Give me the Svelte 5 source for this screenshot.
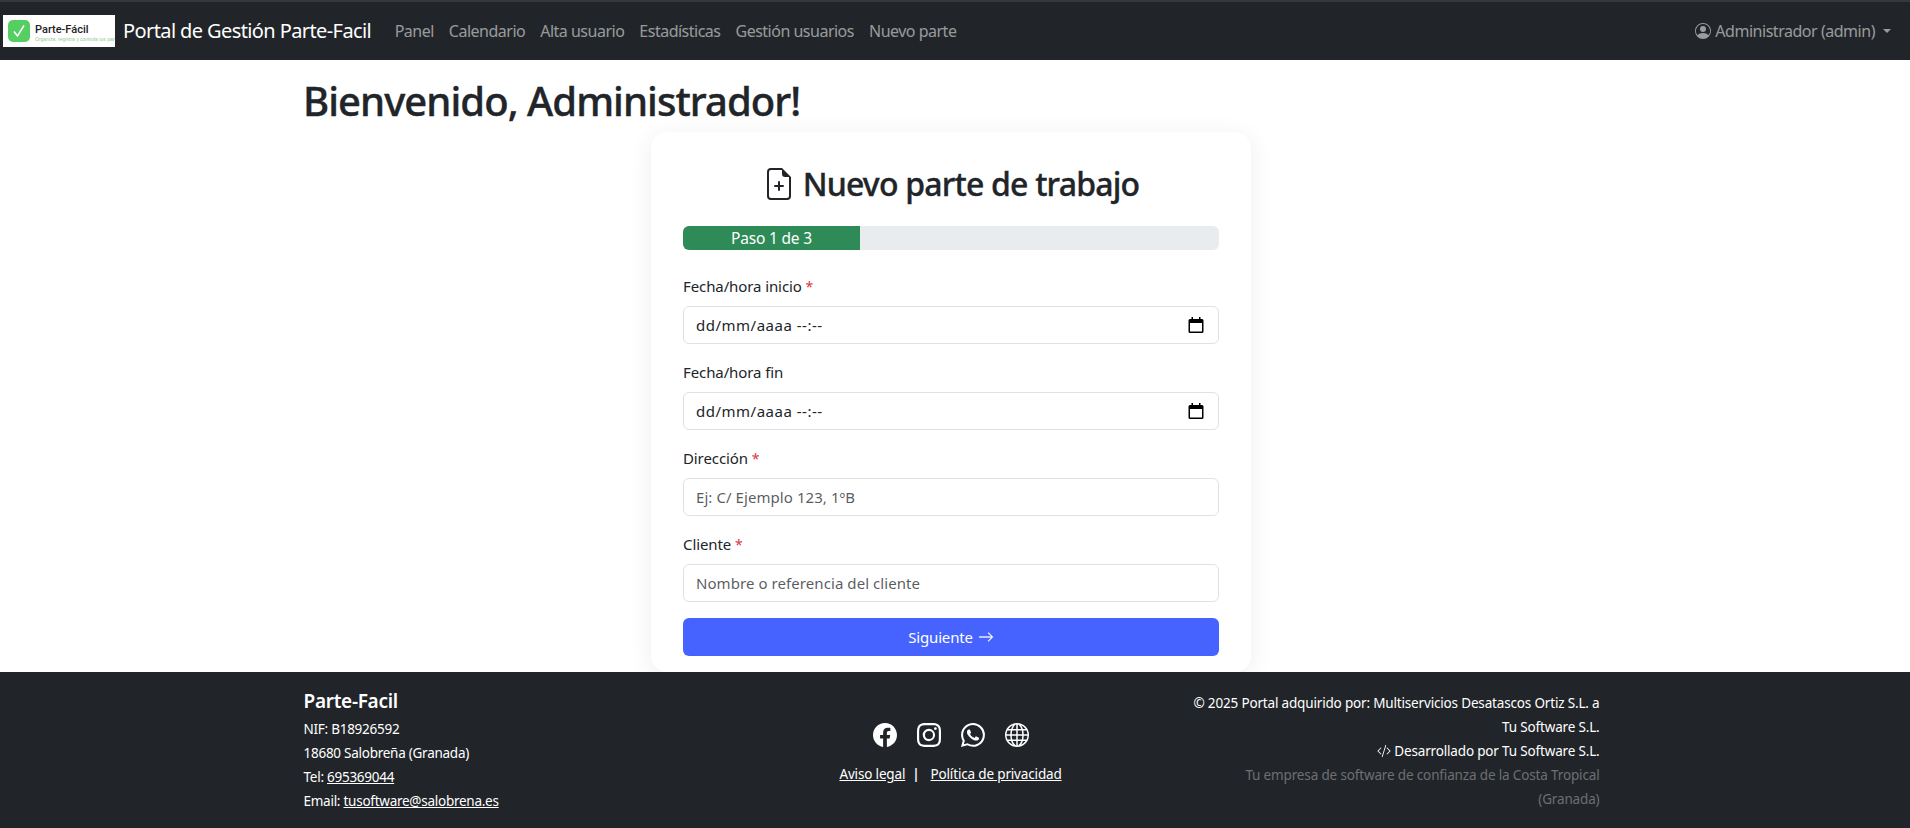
<script>
  const links = ["Panel", "Calendario", "Alta usuario", "Estadísticas", "Gestión usuarios", "Nuevo parte"];
</script>

<div class="page">
  <nav class="navbar">
    <div class="logo">
      <span class="logo-mark">
        <svg viewBox="0 0 16 16" width="16" height="16" fill="none" stroke="#fff" stroke-width="1.5"><path d="M3 8.5 6.5 13 13 2.5" /></svg>
      </span>
      <div class="logo-text">
        <span class="logo-name">Parte-Fácil</span>
        <span class="logo-sub">Organiza, registra y controla tus partes</span>
      </div>
    </div>
    <a class="brand" href="#top">Portal de Gestión Parte-Facil</a>
    <ul class="nav-links">
      {#each links as link}
        <li><a href="#top">{link}</a></li>
      {/each}
    </ul>
    <a class="user" href="#top">
      <svg viewBox="0 0 16 16" width="16" height="16" fill="currentColor">
        <path d="M11 6a3 3 0 1 1-6 0 3 3 0 0 1 6 0" />
        <path fill-rule="evenodd" d="M0 8a8 8 0 1 1 16 0A8 8 0 0 1 0 8m8-7a7 7 0 0 0-5.468 11.37C3.242 11.226 4.805 10 8 10s4.757 1.225 5.468 2.37A7 7 0 0 0 8 1" />
      </svg>
      Administrador (admin)
      <span class="caret"></span>
    </a>
  </nav>

  <main class="main">
    <div class="container">
      <h1>Bienvenido, Administrador!</h1>
      <div class="card">
        <h2>
          <svg viewBox="0 0 16 16" width="32" height="32" fill="currentColor">
            <path d="M8 6.5a.5.5 0 0 1 .5.5v1.5H10a.5.5 0 0 1 0 1H8.5V11a.5.5 0 0 1-1 0V9.5H6a.5.5 0 0 1 0-1h1.5V7a.5.5 0 0 1 .5-.5" />
            <path d="M14 4.5V14a2 2 0 0 1-2 2H4a2 2 0 0 1-2-2V2a2 2 0 0 1 2-2h5.5zm-3 0A1.5 1.5 0 0 1 9.5 3V1H4a1 1 0 0 0-1 1v12a1 1 0 0 0 1 1h8a1 1 0 0 0 1-1V4.5z" />
          </svg>
          Nuevo parte de trabajo
        </h2>

        <div class="progress">
          <div class="progress-bar" style="width: 33%">Paso 1 de 3</div>
        </div>

        <div class="field">
          <label for="inicio">Fecha/hora inicio <span class="req">*</span></label>
          <div class="date-wrap">
            <input id="inicio" class="control date" type="text" value="dd/mm/aaaa --:--" readonly />
            <svg class="cal" viewBox="0 0 16 16" width="16" height="16" fill="#000">
              <path d="M3.5 0v2H2a1.5 1.5 0 0 0-1.5 1.5v11A1.5 1.5 0 0 0 2 16h12a1.5 1.5 0 0 0 1.5-1.5v-11A1.5 1.5 0 0 0 14 2h-1.5V0H11v2H5V0zM2 6h12v8.5H2z" />
            </svg>
          </div>
        </div>

        <div class="field">
          <label for="fin">Fecha/hora fin</label>
          <div class="date-wrap">
            <input id="fin" class="control date" type="text" value="dd/mm/aaaa --:--" readonly />
            <svg class="cal" viewBox="0 0 16 16" width="16" height="16" fill="#000">
              <path d="M3.5 0v2H2a1.5 1.5 0 0 0-1.5 1.5v11A1.5 1.5 0 0 0 2 16h12a1.5 1.5 0 0 0 1.5-1.5v-11A1.5 1.5 0 0 0 14 2h-1.5V0H11v2H5V0zM2 6h12v8.5H2z" />
            </svg>
          </div>
        </div>

        <div class="field">
          <label for="dir">Dirección <span class="req">*</span></label>
          <input id="dir" class="control" type="text" placeholder="Ej: C/ Ejemplo 123, 1ºB" />
        </div>

        <div class="field">
          <label for="cli">Cliente <span class="req">*</span></label>
          <input id="cli" class="control" type="text" placeholder="Nombre o referencia del cliente" />
        </div>

        <button class="next" type="button">
          Siguiente
          <svg viewBox="0 0 16 16" width="16" height="16" fill="currentColor" stroke="currentColor" stroke-width="0.3">
            <path fill-rule="evenodd" d="M1 8a.5.5 0 0 1 .5-.5h11.793l-3.147-3.146a.5.5 0 0 1 .708-.708l4 4a.5.5 0 0 1 0 .708l-4 4a.5.5 0 0 1-.708-.708L13.293 8.5H1.5A.5.5 0 0 1 1 8" />
          </svg>
        </button>
      </div>
    </div>
  </main>

  <footer class="footer">
    <div class="container footer-row">
      <div class="col col-left">
        <h5>Parte-Facil</h5>
        <div>NIF: B18926592</div>
        <div>18680 Salobreña (Granada)</div>
        <div>Tel: <a href="#top">695369044</a></div>
        <div>Email: <a href="#top">tusoftware@salobrena.es</a></div>
      </div>

      <div class="col col-center">
        <div class="socials">
          <svg viewBox="0 0 16 16" width="24" height="24" fill="currentColor">
            <path d="M16 8.049c0-4.446-3.582-8.05-8-8.05C3.58 0-.002 3.603-.002 8.05c0 4.017 2.926 7.347 6.75 7.951v-5.625h-2.03V8.05H6.75V6.275c0-2.017 1.195-3.131 3.022-3.131.876 0 1.791.157 1.791.157v1.98h-1.009c-.993 0-1.303.621-1.303 1.258v1.51h2.218l-.354 2.326H9.25V16c3.824-.604 6.75-3.934 6.75-7.951" />
          </svg>
          <svg viewBox="0 0 16 16" width="24" height="24" fill="currentColor">
            <path d="M8 0C5.829 0 5.556.01 4.703.048 3.85.088 3.269.222 2.76.42a3.9 3.9 0 0 0-1.417.923A3.9 3.9 0 0 0 .42 2.76C.222 3.268.087 3.85.048 4.7.01 5.555 0 5.827 0 8.001c0 2.172.01 2.444.048 3.297.04.852.174 1.433.372 1.942.205.526.478.972.923 1.417.444.445.89.719 1.416.923.51.198 1.09.333 1.942.372C5.555 15.99 5.827 16 8 16s2.444-.01 3.298-.048c.851-.04 1.434-.174 1.943-.372a3.9 3.9 0 0 0 1.416-.923c.445-.445.718-.891.923-1.417.197-.509.332-1.09.372-1.942C15.99 10.445 16 10.173 16 8s-.01-2.445-.048-3.299c-.04-.851-.175-1.433-.372-1.941a3.9 3.9 0 0 0-.923-1.417A3.9 3.9 0 0 0 13.24.42c-.51-.198-1.092-.333-1.943-.372C10.443.01 10.172 0 7.998 0zm-.717 1.442h.718c2.136 0 2.389.007 3.232.046.78.035 1.204.166 1.486.275.373.145.64.319.92.599s.453.546.598.92c.11.281.24.705.275 1.485.039.843.047 1.096.047 3.231s-.008 2.389-.047 3.232c-.035.78-.166 1.203-.275 1.485a2.5 2.5 0 0 1-.599.919c-.28.28-.546.453-.92.598-.28.11-.704.24-1.485.276-.843.038-1.096.047-3.232.047s-2.39-.009-3.233-.047c-.78-.036-1.203-.166-1.485-.276a2.5 2.5 0 0 1-.92-.598 2.5 2.5 0 0 1-.6-.92c-.109-.281-.24-.705-.275-1.485-.038-.843-.046-1.096-.046-3.233s.008-2.388.046-3.231c.036-.78.166-1.204.276-1.486.145-.373.319-.64.599-.92s.546-.453.92-.598c.282-.11.705-.24 1.485-.276.738-.034 1.024-.044 2.515-.045zm4.988 1.328a.96.96 0 1 0 0 1.92.96.96 0 0 0 0-1.92m-4.27 1.122a4.109 4.109 0 1 0 0 8.217 4.109 4.109 0 0 0 0-8.217m0 1.441a2.667 2.667 0 1 1 0 5.334 2.667 2.667 0 0 1 0-5.334" />
          </svg>
          <svg viewBox="0 0 16 16" width="24" height="24" fill="currentColor">
            <path d="M13.601 2.326A7.85 7.85 0 0 0 7.994 0C3.627 0 .068 3.558.064 7.926c0 1.399.366 2.76 1.057 3.965L0 16l4.204-1.102a7.9 7.9 0 0 0 3.79.965h.004c4.368 0 7.926-3.558 7.93-7.93A7.9 7.9 0 0 0 13.6 2.326zM7.994 14.521a6.6 6.6 0 0 1-3.356-.92l-.24-.144-2.494.654.666-2.433-.156-.251a6.56 6.56 0 0 1-1.007-3.505c0-3.626 2.957-6.584 6.591-6.584a6.56 6.56 0 0 1 4.66 1.931 6.56 6.56 0 0 1 1.928 4.66c-.004 3.639-2.961 6.592-6.592 6.592m3.615-4.934c-.197-.099-1.17-.578-1.353-.646-.182-.065-.315-.099-.445.099-.133.197-.513.646-.627.775-.114.133-.232.148-.43.05-.197-.1-.836-.308-1.592-.985-.59-.525-.985-1.175-1.103-1.372-.114-.198-.011-.304.088-.403.087-.088.197-.232.296-.346.1-.114.133-.198.198-.33.065-.134.034-.248-.015-.347-.05-.099-.445-1.076-.612-1.47-.16-.389-.323-.335-.445-.34-.114-.007-.247-.007-.38-.007a.73.73 0 0 0-.529.247c-.182.198-.691.677-.691 1.654s.71 1.916.81 2.049c.098.133 1.394 2.132 3.383 2.992.47.205.84.326 1.129.418.475.152.904.129 1.246.08.38-.058 1.171-.48 1.338-.943.164-.464.164-.86.114-.943-.049-.084-.182-.133-.38-.232" />
          </svg>
          <svg viewBox="0 0 16 16" width="24" height="24" fill="currentColor">
            <path d="M0 8a8 8 0 1 1 16 0A8 8 0 0 1 0 8m7.5-6.923c-.67.204-1.335.82-1.887 1.855A8 8 0 0 0 5.145 4H7.5zM4.09 4a9.3 9.3 0 0 1 .64-1.539 7 7 0 0 1 .597-.933A7.03 7.03 0 0 0 2.255 4zm-.582 3.5c.03-.877.138-1.718.312-2.5H1.674a7 7 0 0 0-.656 2.5zM4.847 5a12.5 12.5 0 0 0-.338 2.5H7.5V5zM8.5 5v2.5h2.99a12.5 12.5 0 0 0-.337-2.5zM4.51 8.5a12.5 12.5 0 0 0 .337 2.5H7.5V8.5zm3.99 0V11h2.653c.187-.765.306-1.608.338-2.5zM5.145 12q.208.58.468 1.068c.552 1.035 1.218 1.65 1.887 1.855V12zm.182 2.472a7 7 0 0 1-.597-.933A9.3 9.3 0 0 1 4.09 12H2.255a7 7 0 0 0 3.072 2.472M3.82 11a13.7 13.7 0 0 1-.312-2.5h-2.49c.062.89.291 1.733.656 2.5zm6.853 3.472A7 7 0 0 0 13.745 12H11.91a9.3 9.3 0 0 1-.64 1.539 7 7 0 0 1-.597.933M8.5 12v2.923c.67-.204 1.335-.82 1.887-1.855q.26-.487.468-1.068zm3.68-1h2.146c.365-.767.594-1.61.656-2.5h-2.49a13.7 13.7 0 0 1-.312 2.5m2.802-3.5a7 7 0 0 0-.656-2.5H12.18c.174.782.282 1.623.312 2.5zM11.27 2.461c.247.464.462.98.64 1.539h1.835a7 7 0 0 0-3.072-2.472c.218.284.418.598.597.933M10.855 4a8 8 0 0 0-.468-1.068C9.835 1.897 9.17 1.282 8.5 1.077V4z" />
          </svg>
        </div>
        <div class="legal">
          <a href="#top">Aviso legal</a>
          <span class="sep">|</span>
          <a href="#top">Política de privacidad</a>
        </div>
      </div>

      <div class="col col-right">
        <div>© 2025 Portal adquirido por: Multiservicios Desatascos Ortiz S.L. a Tu Software S.L.</div>
        <div>
          <svg viewBox="0 0 16 16" width="14" height="14" fill="currentColor">
            <path d="M10.478 1.647a.5.5 0 1 0-.956-.294l-4 13a.5.5 0 0 0 .956.294zM4.854 4.146a.5.5 0 0 1 0 .708L1.707 8l3.147 3.146a.5.5 0 0 1-.708.708l-3.5-3.5a.5.5 0 0 1 0-.708l3.5-3.5a.5.5 0 0 1 .708 0m6.292 0a.5.5 0 0 0 0 .708L14.293 8l-3.147 3.146a.5.5 0 0 0 .708.708l3.5-3.5a.5.5 0 0 0 0-.708l-3.5-3.5a.5.5 0 0 0-.708 0" />
          </svg>
          Desarrollado por Tu Software S.L.
        </div>
        <div class="muted">Tu empresa de software de confianza de la Costa Tropical (Granada)</div>
      </div>
    </div>
  </footer>
</div>

<style>
  :global(body) {
    margin: 0;
    background: #fff;
    color: #212529;
    font-family: "Noto Sans", "Open Sans", sans-serif;
    font-size: 16px;
    line-height: 1.5;
    overflow: hidden;
  }

  .page {
    display: flex;
    flex-direction: column;
    min-height: 100vh;
  }

  a {
    color: inherit;
  }

  .navbar {
    display: flex;
    align-items: center;
    box-sizing: border-box;
    height: 60px;
    padding: 0 19px 0 3px;
    background: #212529;
    border-top: 2px solid #36383c;
  }

  .logo {
    display: flex;
    align-items: center;
    gap: 5px;
    box-sizing: border-box;
    width: 112px;
    height: 32px;
    padding-left: 5px;
    overflow: hidden;
    background: #fff;
    font-family: "Liberation Sans", Arial, sans-serif;
    white-space: nowrap;
  }

  .logo-mark {
    display: flex;
    flex: none;
    align-items: center;
    justify-content: center;
    width: 22px;
    height: 22px;
    border-radius: 5px;
    background: #55cf62;
  }

  .logo-text {
    display: flex;
    flex-direction: column;
    padding-top: 5px;
  }

  .logo-name {
    color: #222;
    font-family: Roboto, "Liberation Sans", sans-serif;
    font-size: 11px;
    font-weight: 500;
    line-height: 11px;
  }

  .logo-sub {
    color: #8ccf8e;
    font-size: 5px;
    line-height: 8px;
  }

  .brand {
    margin-left: 8px;
    color: #fff;
    font-size: 20px;
    text-decoration: none;
    letter-spacing: -0.6px;
  }

  .nav-links {
    display: flex;
    margin: 0 0 0 16px;
    padding: 0;
    list-style: none;
  }

  .nav-links a {
    display: block;
    padding: 8px 7.5px;
    color: rgba(255, 255, 255, 0.55);
    text-decoration: none;
    letter-spacing: -0.5px;
  }

  .user {
    display: flex;
    align-items: center;
    gap: 4px;
    margin-left: auto;
    color: rgba(255, 255, 255, 0.55);
    text-decoration: none;
    letter-spacing: -0.47px;
  }

  .caret {
    width: 0;
    height: 0;
    margin-left: 4px;
    border-top: 4.8px solid currentColor;
    border-right: 4.8px solid transparent;
    border-left: 4.8px solid transparent;
  }

  .main {
    flex: 1;
    padding-right: 8px;
  }

  .container {
    box-sizing: border-box;
    width: 1320px;
    margin: 0 auto;
    padding: 0 12px;
  }

  h1 {
    margin: 17px 0 7px;
    font-size: 40px;
    font-weight: 500;
    line-height: 48px;
    letter-spacing: -0.95px;
    -webkit-text-stroke: 0.4px currentColor;
  }

  .card {
    box-sizing: border-box;
    width: 600px;
    margin: 0 auto;
    padding: 32px 32px 16px;
    background: #fff;
    border-radius: 16px;
    box-shadow: 0 4px 24px rgba(0, 0, 0, 0.07);
  }

  h2 {
    display: flex;
    align-items: center;
    justify-content: center;
    gap: 8px;
    margin: 0 0 23px;
    padding-top: 1px;
    font-size: 32px;
    font-weight: 500;
    line-height: 38.4px;
    letter-spacing: -0.8px;
    -webkit-text-stroke: 0.35px currentColor;
  }

  .progress {
    height: 24px;
    margin-bottom: 24px;
    overflow: hidden;
    background: #e9ecef;
    border-radius: 6px;
  }

  .progress-bar {
    height: 100%;
    background: #2e8b57;
    color: #fff;
    font-size: 15.5px;
    line-height: 24px;
    text-align: center;
    letter-spacing: -0.2px;
  }

  .field {
    margin-bottom: 16px;
  }

  label {
    display: block;
    margin-bottom: 8px;
    font-size: 15px;
    line-height: 24px;
    letter-spacing: -0.1px;
  }

  .req {
    color: #dc3545;
    font-size: 14px;
    line-height: 1;
  }

  .control {
    display: block;
    box-sizing: border-box;
    width: 100%;
    height: 38px;
    padding: 6px 12px;
    background: #fff;
    border: 1px solid #dee2e6;
    border-radius: 6px;
    color: #212529;
    font-family: inherit;
    font-size: 15px;
    letter-spacing: 0.07px;
  }

  .date {
    letter-spacing: 0.5px;
  }

  .control::placeholder {
    color: rgba(33, 37, 41, 0.75);
    opacity: 1;
  }

  .date-wrap {
    position: relative;
  }

  .cal {
    position: absolute;
    top: 11px;
    right: 15px;
  }

  .next {
    display: flex;
    align-items: center;
    justify-content: center;
    gap: 5px;
    width: 100%;
    height: 38px;
    background: #4663ff;
    border: 0;
    border-radius: 6px;
    color: #fff;
    font-family: inherit;
    font-size: 15px;
    letter-spacing: -0.15px;
  }

  .footer {
    padding: 17px 7px 15px 0;
    background: #212529;
    color: #fff;
    font-size: 13.5px;
    line-height: 24px;
  }

  .footer-row {
    display: grid;
    grid-template-columns: 1fr 1fr 1fr;
    column-gap: 24px;
  }

  .col-left {
    letter-spacing: -0.26px;
  }

  h5 {
    margin: 0 0 4px;
    font-size: 19px;
    font-weight: 600;
    line-height: 24px;
    letter-spacing: -0.3px;
  }

  .col-center {
    display: flex;
    flex-direction: column;
    align-items: center;
    padding: 34px 2px 0 0;
  }

  .socials {
    display: flex;
    gap: 20px;
    height: 24px;
    margin-bottom: 15px;
  }

  .legal {
    display: flex;
    letter-spacing: -0.16px;
  }

  .sep {
    margin: 0 11px 0 7px;
    font-weight: 600;
  }

  .col-right {
    margin-top: 2px;
    text-align: right;
    letter-spacing: -0.17px;
  }

  .col-right svg {
    vertical-align: -2px;
  }

  .muted {
    color: rgba(255, 255, 255, 0.35);
    letter-spacing: -0.15px;
  }
</style>
